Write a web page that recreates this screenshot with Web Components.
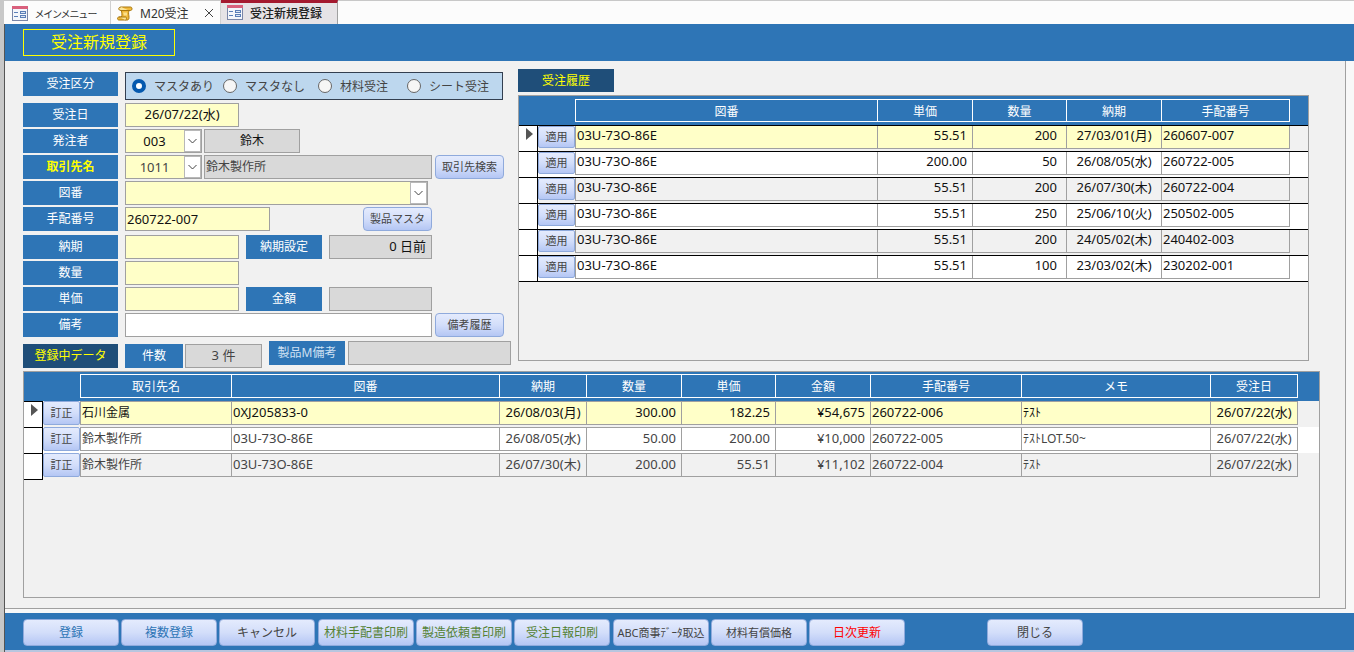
<!DOCTYPE html>
<html lang="ja">
<head>
<meta charset="utf-8">
<title>受注新規登録</title>
<style>
    body {
        margin: 0;
        font-family: "Noto Sans", "Noto Sans CJK JP", sans-serif;
        font-size: 12px;
        color: #444;
    }
</style>
</head>
<body>
<order-app></order-app>

<script>
// Pestañas de documentos
class DocTab extends HTMLElement {
    constructor() {
        super();
        const shadow = this.attachShadow({ mode: 'open' });
        const form = `
            <svg width="16" height="15" viewBox="0 0 16 15">
                <rect x="0.5" y="0.5" width="15" height="14" fill="#f4f6fb" stroke="#7a86a8"/>
                <rect x="0" y="0" width="16" height="3" fill="#d9607c"/>
                <path d="M2 6.5h4M2 10.5h4" stroke="#5b7fb8"/>
                <rect x="8" y="5" width="6" height="3" fill="#5b7fb8"/>
                <rect x="8" y="9" width="6" height="3" fill="#5b7fb8"/>
                <path d="M9 6.5h4M9 10.5h4" stroke="#dce6f5"/>
            </svg>`;
        const macro = `
            <svg width="16" height="15" viewBox="0 0 16 15">
                <path d="M4 1h9.500c2 0 2 3.500 0 3.500H12c-1 3 0 4.500 0 7 0 2-1 2.500-2 2.500H2c-2 0-2-3 0-3h2.500c1-2.500 0-4 0-6.500z" fill="#f0b93a" stroke="#a8770f"/>
                <path d="M4 1c-3 0-3 3.500 0 3.500h8M2 11h6.500c1.500 0 1 3 0 3" fill="#fbe59a" stroke="#a8770f"/>
                <path d="M6 6.500h4v3H7z" fill="#fbe08a"/>
            </svg>`;
        const close = `<button aria-label="閉じる"><svg width="10" height="10" viewBox="0 0 10 10"><path d="M1 1l8 8M9 1l-8 8" stroke="#444" fill="none"/></svg></button>`;

        shadow.innerHTML = `
            <style>
                :host {
                    display: flex;
                    align-items: center;
                    box-sizing: border-box;
                    height: 24px;
                    gap: 7px;
                    padding: 2px 6px 0;
                    border-right: 1px solid #d0d0d0;
                    color: #333;
                    white-space: nowrap;
                }
                :host([active]) {
                    background: #e6e3e6;
                    border-top: 3px solid #a4192f;
                    padding-top: 0;
                    padding-bottom: 2px;
                    color: #222;
                    font-weight: 500;
                    border-right: 1px solid #a0a0a0;
                }
                :host([small]) span {
                    font-size: 10px;
                    font-feature-settings: "palt";
                }
                svg { display: block; flex: none; }
                span { flex: 1; }
                button { border: 0; background: none; padding: 0; }
            </style>
            ${this.getAttribute('icon') === 'macro' ? macro : form}
            <span><slot></slot></span>
            ${this.hasAttribute('closable') ? close : ''}
        `;
    }
}
customElements.define('doc-tab', DocTab);

// Etiqueta azul sin control propio
class CaptionBox extends HTMLElement {
    constructor() {
        super();
        const shadow = this.attachShadow({ mode: 'open' });

        shadow.innerHTML = `
            <style>
                :host {
                    display: block;
                    box-sizing: border-box;
                    width: 95px;
                    height: 24px;
                    line-height: 23px;
                    background: #2e75b6;
                    color: #fff;
                    text-align: center;
                }
                :host([dark]) { background: #1f4e79; color: #ff0; }
            </style>
            <slot></slot>
        `;
    }
}
customElements.define('caption-box', CaptionBox);

// Botón con degradado
class SoftButton extends HTMLElement {
    constructor() {
        super();
        const shadow = this.attachShadow({ mode: 'open' });

        shadow.innerHTML = `
            <style>
                :host { display: block; width: 69px; height: 24px; font-size: 11px; }
                button {
                    display: block;
                    box-sizing: border-box;
                    width: 100%;
                    height: 100%;
                    padding: 0 0 2px;
                    border: 1px solid #8faadc;
                    border-radius: 4px;
                    background: linear-gradient(#e4ebfd, #d3defa 50%, #b4c6f4);
                    color: inherit;
                    font: inherit;
                    white-space: nowrap;
                }
                :host([flat]) button { border-radius: 2px; }
            </style>
            <button type="button"><slot></slot></button>
        `;
    }
}
customElements.define('soft-button', SoftButton);

// Etiqueta + campo; lo que va detrás entra por el slot
class EntryField extends HTMLElement {
    constructor() {
        super();
        const shadow = this.attachShadow({ mode: 'open' });
        const label = this.getAttribute('label');
        const value = this.getAttribute('value') || '';
        const side = this.getAttribute('side');
        const readonly = this.hasAttribute('readonly') ? 'readonly' : '';
        const control = this.hasAttribute('combo')
            ? `<span class="combo"><select id="field"><option>${value}</option></select>
                <svg width="17" height="22" viewBox="0 0 17 22"><rect x="0.5" y="0.5" width="16" height="21" fill="#fff" stroke="#b8b8b8"/><path d="M4.500 9l4 4 4-4" fill="none" stroke="#444"/></svg></span>`
            : `<input id="field" type="text" value="${value}" ${readonly}>`;

        shadow.innerHTML = `
            <style>
                :host { display: flex; height: 24px; }
                label {
                    flex: none;
                    box-sizing: border-box;
                    width: var(--label-width, 95px);
                    margin-right: var(--label-gap, 7px);
                    line-height: 24px;
                    background: #2e75b6;
                    color: #fff;
                    text-align: center;
                    white-space: nowrap;
                }
                :host([strong]) label { color: #ff0; font-weight: bold; }
                :host([pale]) label { color: #cfe0f2; }
                .combo { position: relative; flex: none; width: var(--field-width, 114px); }
                .combo svg { position: absolute; right: 1px; top: 1px; pointer-events: none; }
                input, select {
                    flex: none;
                    box-sizing: border-box;
                    width: var(--field-width, 114px);
                    height: 24px;
                    margin: 0;
                    padding: 0 2px;
                    border: 1px solid #a0a0a0;
                    border-radius: 0;
                    background: #ffffc8;
                    color: #111;
                    font: inherit;
                    font-size: 13px;
                    outline: 0;
                    text-align: var(--field-align, left);
                }
                input { padding: var(--field-pad, 0 1px); }
                select { appearance: none; width: 100%; padding-right: 20px; }
                :host([muted]) select, :host([muted]) input { color: #444; }
                input[readonly], input.side { background: #d9d9d9; }
                :host([white]) input { background: #fff; }
                input.side {
                    width: var(--side-width);
                    margin-left: 2px;
                    padding: 0 1px 2px;
                    text-align: var(--side-align, left);
                    font-size: 12px;
                }
            </style>
            <label for="field">${label}</label>
            ${control}
            ${side ? `<input class="side" type="text" aria-label="${label}" value="${side}" readonly>` : ''}
            <slot></slot>
        `;
    }
}
customElements.define('entry-field', EntryField);

// Opciones de tipo de pedido
class RadioStrip extends HTMLElement {
    constructor() {
        super();
        const shadow = this.attachShadow({ mode: 'open' });
        const options = this.getAttribute('options').split(',');

        shadow.innerHTML = `
            <style>
                :host {
                    display: grid;
                    grid-template-columns: 91px 95px 89px auto;
                    align-items: center;
                    box-sizing: border-box;
                    width: 378px;
                    height: 28px;
                    padding-left: 6px;
                    border: 1px solid #333f50;
                    background: #bdd7ee;
                }
                label { display: flex; align-items: center; gap: 8px; white-space: nowrap; }
                input {
                    appearance: none;
                    box-sizing: border-box;
                    width: 14px;
                    height: 14px;
                    margin: 0;
                    border: 1px solid #666;
                    border-radius: 50%;
                    background: #f6f6f6;
                }
                input:checked { border: 4px solid #0559ae; background: #fff; }
            </style>
            ${options.map((text, i) => `<label><input type="radio" name="kind" ${i ? '' : 'checked'}>${text}</label>`).join('')}
        `;
    }
}
customElements.define('radio-strip', RadioStrip);

// Tablas de datos
const SHEETS = {
    history: {
        action: '適用',
        columns: [
            ['図番', 'auto', 'left'], ['単価', 95, 'right'], ['数量', 94, 'right wide'],
            ['納期', 95, 'center'], ['手配番号', 129, 'left']
        ],
        rest: 18,
        rows: [
            ['03U-73O-86E', '55.51', '200', '27/03/01(月)', '260607-007'],
            ['03U-73O-86E', '200.00', '50', '26/08/05(水)', '260722-005'],
            ['03U-73O-86E', '55.51', '200', '26/07/30(木)', '260722-004'],
            ['03U-73O-86E', '55.51', '250', '25/06/10(火)', '250502-005'],
            ['03U-73O-86E', '55.51', '200', '24/05/02(木)', '240402-003'],
            ['03U-73O-86E', '55.51', '100', '23/03/02(木)', '230202-001']
        ]
    },
    entries: {
        action: '訂正',
        columns: [
            ['取引先名', 151, 'left jp'], ['図番', 'auto', 'left'], ['納期', 87, 'center'],
            ['数量', 95, 'right'], ['単価', 94, 'right'], ['金額', 95, 'right'],
            ['手配番号', 151, 'left'], ['メモ', 189, 'left jp'], ['受注日', 88, 'center']
        ],
        rest: 21,
        rows: [
            ['石川金属', '0XJ205833-0', '26/08/03(月)', '300.00', '182.25', '¥54,675', '260722-006', 'ﾃｽﾄ', '26/07/22(水)'],
            ['鈴木製作所', '03U-73O-86E', '26/08/05(水)', '50.00', '200.00', '¥10,000', '260722-005', 'ﾃｽﾄLOT.50~', '26/07/22(水)'],
            ['鈴木製作所', '03U-73O-86E', '26/07/30(木)', '200.00', '55.51', '¥11,102', '260722-004', 'ﾃｽﾄ', '26/07/22(水)']
        ]
    }
};

class SheetTable extends HTMLElement {
    constructor() {
        super();
        const shadow = this.attachShadow({ mode: 'open' });
        const sheet = SHEETS[this.getAttribute('sheet')];
        const width = w => w === 'auto' ? '' : `style="width:${w}px"`;
        const last = i => i === sheet.columns.length - 1 ? 'last' : '';
        const marker = `<svg width="7" height="12" viewBox="0 0 7 12"><path d="M0 0l7 6-7 6z" fill="#555"/></svg>`;

        shadow.innerHTML = `
            <style>
                :host {
                    display: block;
                    box-sizing: border-box;
                    border: 1px solid #a0a0a0;
                    background: #f1f1f1;
                    color: #111;
                }
                table {
                    width: 100%;
                    table-layout: fixed;
                    border-collapse: separate;
                    border-spacing: 0;
                }
                th, td { padding: 0; font-weight: normal; }
                thead th {
                    height: 29px;
                    background: #2e75b6;
                    color: #fff;
                    vertical-align: top;
                }
                thead div {
                    box-sizing: border-box;
                    height: 24px;
                    margin-top: 2px;
                    line-height: 23px;
                    border: 1px solid #fff;
                    border-right: 0;
                }
                thead th.last div { border-right: 1px solid #fff; }
                tbody tr { background: #f1f1f1; }
                tbody tr:nth-child(2) { background: #fff; }
                tbody td { height: 26px; box-sizing: border-box; vertical-align: top; }
                tbody td div {
                    box-sizing: border-box;
                    height: 24px;
                    padding: 0 1px;
                    font-size: 13px;
                    white-space: nowrap;
                    overflow: hidden;
                    border: solid #a0a0a0;
                    border-width: 1px 0 1px 1px;
                    line-height: 20px;
                }
                td.last div { border-right-width: 1px; }
                td.jp div { font-size: 12px; line-height: 22px; }
                td.right div { text-align: right; padding-right: 5px; }
                td.wide div { padding-right: 9px; }
                td.center div { text-align: center; }
                tbody tr:first-child td div { background: #ffffc8; }
                td.mark {
                    background: #fff;
                    border-top: 1px solid #000;
                    border-right: 1px solid #000;
                }
                td.mark svg { display: block; margin: 2px 0 0 7px; }
                td.act soft-button { width: 37px; color: #444; }

                :host([sheet=history]) thead div { height: 23px; margin-top: 3px; }
                :host([sheet=history]) tbody td { border-top: 1px solid #000; }
                :host([sheet=history]) tbody tr:nth-child(even) { background: #fff; }
                :host([sheet=history]) tbody tr:last-child { background: #fff; }
                :host([sheet=history]) tbody tr:last-child td { border-bottom: 1px solid #000; height: 27px; }
                :host([sheet=history]) tbody td div { height: 23px; border-top: 0; line-height: 18px; }
                :host([sheet=history]) td.act soft-button { height: 22px; }
                :host([sheet=entries]) tbody tr:last-child td.mark { border-bottom: 1px solid #000; height: 27px; }
                :host([sheet=entries]) tbody tr:nth-child(n+2) { color: #444; }
            </style>
            <table>
                <colgroup>
                    <col style="width:19px"><col style="width:37px">
                    ${sheet.columns.map(c => `<col ${width(c[1])}>`).join('')}
                    <col style="width:${sheet.rest}px">
                </colgroup>
                <thead>
                    <tr>
                        <th></th><th></th>
                        ${sheet.columns.map((c, i) => `<th class="${last(i)}"><div>${c[0]}</div></th>`).join('')}
                        <th></th>
                    </tr>
                </thead>
                <tbody>
                    ${sheet.rows.map((row, n) => `
                        <tr>
                            <td class="mark">${n ? '' : marker}</td>
                            <td class="act"><soft-button flat>${sheet.action}</soft-button></td>
                            ${row.map((text, i) => `<td class="${sheet.columns[i][2]} ${last(i)}"><div>${text}</div></td>`).join('')}
                            <td></td>
                        </tr>`).join('')}
                </tbody>
            </table>
        `;
    }
}
customElements.define('sheet-table', SheetTable);

// Formulario de captura
class OrderForm extends HTMLElement {
    constructor() {
        super();
        const shadow = this.attachShadow({ mode: 'open' });

        shadow.innerHTML = `
            <style>
                :host { display: block; padding-top: 3px; }
                .kind { display: flex; gap: 7px; margin-bottom: 3px; }
                .group { display: grid; gap: 2px; margin-bottom: 4px; }
                .group.last { margin-bottom: 7px; }
                .pair { --field-width: 77px; --field-align: center; --side-width: 96px; --side-align: center; }
                .partner { --side-width: 228px; --side-align: left; }
                .date { --field-align: center; --field-pad: 0 1px 3px; }
                .part { --field-width: 303px; }
                .number { --field-width: 145px; }
                .note { --field-width: 307px; }
                .nested { --label-width: 76px; --field-width: 103px; margin-left: 7px; }
                .days { --field-align: right; --field-pad: 0 5px 3px; }
                .near { margin-left: 3px; }
                .far { margin-left: 93px; }
                .summary { display: flex; gap: 7px; }
                .count { --label-width: 58px; --label-gap: 2px; --field-width: 77px; --field-align: center; --field-pad: 0 1px 3px; }
                .memo { --label-width: 76px; --label-gap: 3px; --field-width: 163px; margin-top: -3px; }
            </style>
            <div class="kind">
                <caption-box>受注区分</caption-box>
                <radio-strip options="マスタあり,マスタなし,材料受注,シート受注"></radio-strip>
            </div>
            <div class="group">
                <entry-field class="date" label="受注日" value="26/07/22(水)"></entry-field>
                <entry-field class="pair" label="発注者" value="003" side="鈴木" combo></entry-field>
                <entry-field class="pair partner" label="取引先名" value="1011" side="鈴木製作所" combo strong muted>
                    <soft-button class="near">取引先検索</soft-button>
                </entry-field>
                <entry-field class="part" label="図番" combo></entry-field>
                <entry-field class="number" label="手配番号" value="260722-007">
                    <soft-button class="far">製品マスタ</soft-button>
                </entry-field>
            </div>
            <div class="group last">
                <entry-field label="納期">
                    <entry-field class="nested days" label="納期設定" value="0 日前" readonly></entry-field>
                </entry-field>
                <entry-field label="数量"></entry-field>
                <entry-field label="単価">
                    <entry-field class="nested" label="金額" readonly></entry-field>
                </entry-field>
                <entry-field class="note" label="備考" white>
                    <soft-button class="near">備考履歴</soft-button>
                </entry-field>
            </div>
            <div class="summary">
                <caption-box dark>登録中データ</caption-box>
                <entry-field class="count" label="件数" value="3 件" readonly muted></entry-field>
                <entry-field class="memo" label="製品M備考" readonly pale></entry-field>
            </div>
        `;
    }
}
customElements.define('order-form', OrderForm);

// Barra inferior de acciones
class ActionBar extends HTMLElement {
    constructor() {
        super();
        const shadow = this.attachShadow({ mode: 'open' });

        shadow.innerHTML = `
            <style>
                :host {
                    display: flex;
                    gap: 3px;
                    padding: 6px 18px 4px;
                    background: #2e75b6;
                    border-bottom: 2px solid #b8c6df;
                }
                div { display: flex; gap: 2px; }
                soft-button { width: 96px; height: 27px; font-size: 12px; }
                .blue { color: #2e75b6; }
                .green { color: #548235; }
                .red { color: #f00; }
                .small { font-size: 11px; }
                .close { margin-left: 79px; }
            </style>
            <div>
                <soft-button class="blue">登録</soft-button>
                <soft-button class="blue">複数登録</soft-button>
                <soft-button>キャンセル</soft-button>
            </div>
            <div>
                <soft-button class="green">材料手配書印刷</soft-button>
                <soft-button class="green">製造依頼書印刷</soft-button>
                <soft-button class="green">受注日報印刷</soft-button>
            </div>
            <div>
                <soft-button class="small">ABC商事ﾃﾞｰﾀ取込</soft-button>
                <soft-button class="small">材料有償価格</soft-button>
                <soft-button class="red">日次更新</soft-button>
            </div>
            <soft-button class="close">閉じる</soft-button>
        `;
    }
}
customElements.define('action-bar', ActionBar);

// Ventana completa
class OrderApp extends HTMLElement {
    constructor() {
        super();
        const shadow = this.attachShadow({ mode: 'open' });

        shadow.innerHTML = `
            <style>
                :host {
                    display: flex;
                    flex-direction: column;
                    box-sizing: border-box;
                    min-height: 100vh;
                    border-left: 4px solid #c8c8c8;
                    background: #f8f8f8;
                }
                nav { display: flex; height: 24px; padding-left: 2px; background: #fcfcfc; box-shadow: inset 0 1px #c8c8c8; }
                .menu { width: 105px; }
                .macro { width: 110px; }
                .order { width: 117px; }
                .frame { flex: 1; display: flex; flex-direction: column; border-left: 1px solid #555; }
                header { padding: 5px 18px; background: #2e75b6; }
                h1 {
                    box-sizing: border-box;
                    width: 152px;
                    height: 27px;
                    margin: 0;
                    border: 1px solid #ff0;
                    color: #ff0;
                    font-size: 16px;
                    font-weight: normal;
                    line-height: 24px;
                    text-align: center;
                }
                main {
                    flex: 1;
                    display: flex;
                    flex-direction: column;
                    gap: 3px;
                    margin: 0 8px 4px 0;
                    padding: 8px 25px 10px 18px;
                    background: #f1f1f1;
                    border-right: 1px solid #a0a0a0;
                    border-bottom: 1px solid #a0a0a0;
                }
                .upper { display: grid; grid-template-columns: 488px 1fr; gap: 7px; padding-right: 11px; }
                .history { display: flex; flex-direction: column; gap: 3px; padding-bottom: 7px; }
                .history caption-box { width: 96px; height: 23px; }
                .history sheet-table { flex: 1; }
                .entries { flex: 1; }
            </style>
            <nav>
                <doc-tab class="menu" small>メインメニュー</doc-tab>
                <doc-tab class="macro" icon="macro" closable>M20受注</doc-tab>
                <doc-tab class="order" active>受注新規登録</doc-tab>
            </nav>
            <div class="frame">
                <header><h1>受注新規登録</h1></header>
                <main>
                    <div class="upper">
                        <order-form></order-form>
                        <section class="history">
                            <caption-box dark>受注履歴</caption-box>
                            <sheet-table sheet="history"></sheet-table>
                        </section>
                    </div>
                    <sheet-table class="entries" sheet="entries"></sheet-table>
                </main>
                <action-bar></action-bar>
            </div>
        `;
    }
}
customElements.define('order-app', OrderApp);
</script>
</body>
</html>
